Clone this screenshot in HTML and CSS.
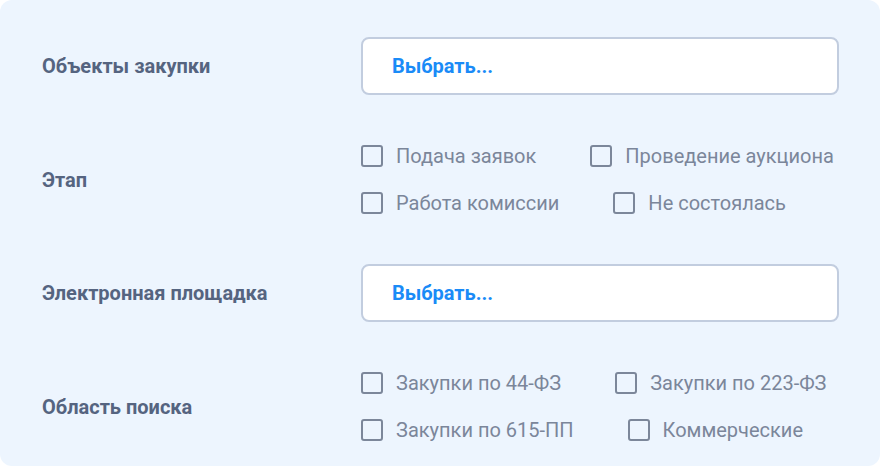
FILE: index.html
```html
<!DOCTYPE html>
<html lang="ru">
<head>
<meta charset="utf-8">
<link rel="stylesheet" href="styles.css">
</head>
<body>
<div class="panel">
  <div class="label">Объекты закупки</div>
  <div class="control"><div class="select">Выбрать...</div></div>

  <div class="label">Этап</div>
  <div class="control checks">
    <div class="check-row">
      <label class="check"><span class="box"></span>Подача заявок</label>
      <label class="check"><span class="box"></span>Проведение аукциона</label>
    </div>
    <div class="check-row">
      <label class="check"><span class="box"></span>Работа комиссии</label>
      <label class="check"><span class="box"></span>Не состоялась</label>
    </div>
  </div>

  <div class="label">Электронная площадка</div>
  <div class="control"><div class="select">Выбрать...</div></div>

  <div class="label">Область поиска</div>
  <div class="control checks">
    <div class="check-row">
      <label class="check"><span class="box"></span>Закупки по 44-ФЗ</label>
      <label class="check"><span class="box"></span>Закупки по 223-ФЗ</label>
    </div>
    <div class="check-row">
      <label class="check"><span class="box"></span>Закупки по 615-ПП</label>
      <label class="check"><span class="box"></span>Коммерческие</label>
    </div>
  </div>
</div>
</body>
</html>
```
FILE: styles.css
```css
html, body {
  margin: 0;
  padding: 0;
  background: #ffffff;
}
body {
  font-family: Roboto, "Noto Sans", sans-serif;
}
.panel {
  box-sizing: border-box;
  width: 880px;
  height: 466px;
  background: #EDF5FE;
  border-radius: 12px;
  padding: 37px 41px 0 42px;
  display: grid;
  grid-template-columns: 319px 478px;
  row-gap: 48px;
  align-items: center;
  align-content: start;
}
.label {
  font-size: 20px;
  font-weight: 700;
  color: #556480;
}
.select {
  box-sizing: border-box;
  height: 58px;
  border: 2px solid #C2CDDF;
  border-radius: 8px;
  background: #fff;
  padding-left: 29px;
  display: flex;
  align-items: center;
  font-size: 20px;
  font-weight: 700;
  color: #1A8BF7;
}
.checks {
  display: flex;
  flex-direction: column;
  row-gap: 21px;
}
.check-row {
  display: flex;
  column-gap: 54px;
  height: 26px;
  align-items: center;
}
.check {
  display: flex;
  align-items: center;
  font-size: 20px;
  color: #7B869A;
  white-space: nowrap;
}
.box {
  box-sizing: border-box;
  width: 22px;
  height: 22px;
  border: 2px solid #7C879A;
  border-radius: 3px;
  margin-right: 13px;
  flex: none;
}
```
